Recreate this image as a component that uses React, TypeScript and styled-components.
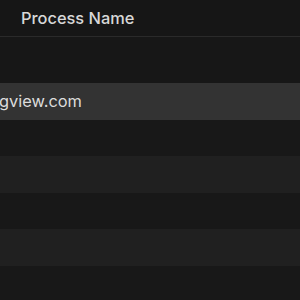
import styled, { createGlobalStyle } from "styled-components";

const GlobalStyle = createGlobalStyle`
  html, body {
    margin: 0;
    padding: 0;
    background: #171717;
  }
  body {
    font-family: Inter, "Liberation Sans", sans-serif;
    -webkit-font-smoothing: antialiased;
  }
`;

const Table = styled.div`
  width: 300px;
  height: 300px;
  overflow: hidden;
  display: flex;
  flex-direction: column;
  background: #171717;
`;

const Header = styled.div`
  height: 36px;
  flex-shrink: 0;
  display: flex;
  align-items: center;
  padding-left: 21px;
  border-bottom: 1px solid #2a2a2a;
  background: #161616;
  color: #d8d8d8;
  font-size: 16.4px;
  font-weight: 500;
`;

const Spacer = styled.div`
  height: 46px;
  flex-shrink: 0;
  background: #171717;
`;

const Row = styled.div<{ $selected?: boolean; $alt?: boolean }>`
  height: 36.5px;
  flex-shrink: 0;
  display: flex;
  align-items: center;
  white-space: nowrap;
  overflow: hidden;
  background: ${({ $selected, $alt }) =>
    $selected ? "#333333" : $alt ? "#202020" : "#181818"};
  color: #dcdcdc;
  font-size: 16.4px;
`;

const Cell = styled.span`
  margin-left: -1px;
`;

const rows = [
  { name: "gview.com", selected: true },
  { name: "" },
  { name: "", alt: true },
  { name: "" },
  { name: "", alt: true },
  { name: "" },
];

export default function App() {
  return (
    <>
      <GlobalStyle />
      <Table>
        <Header>Process Name</Header>
        <Spacer />
        {rows.map((r, i) => (
          <Row key={i} $selected={r.selected} $alt={r.alt}>
            <Cell>{r.name}</Cell>
          </Row>
        ))}
      </Table>
    </>
  );
}
